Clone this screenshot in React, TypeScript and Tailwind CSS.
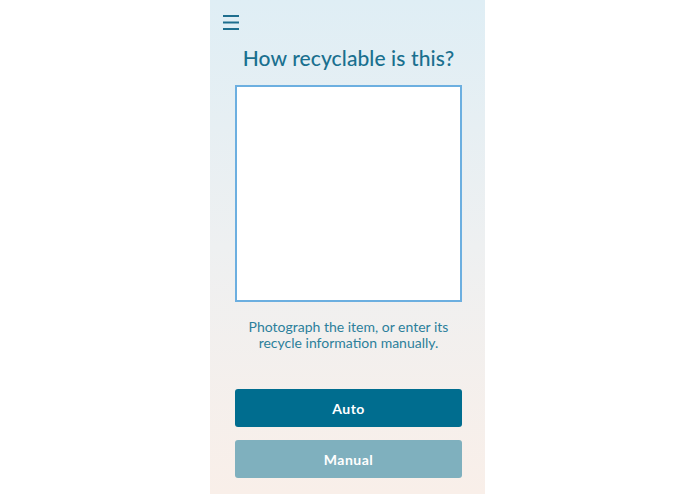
import React from "react";

const font = { fontFamily: '"Lato", "Open Sans", sans-serif' };

const MenuIcon = () => (
  <svg width="16" height="15" viewBox="0 0 16 15" fill="none">
    <path d="M0 1h16M0 7.5h16M0 14h16" stroke="#1e6e8e" strokeWidth="2" />
  </svg>
);

const App = () => {
  return (
    <div className="flex justify-center w-full h-[494px] bg-white" style={font}>
      <div className="flex flex-col w-[275px] h-full pl-[25px] pr-[23px] bg-linear-to-b from-[#dfeef5] via-[#eef0f1] to-[#f9efe9]">
        <button type="button" className="mt-[15px] -ml-[12px] w-[16px] h-[15px] flex">
          <MenuIcon />
        </button>
        <h1 className="mt-[16px] text-center text-[21px] leading-[24px] font-medium text-[#19708f] tracking-[0.1px]">
          How recyclable is this?
        </h1>
        <div className="mt-[15px] h-[217px] p-[2px] bg-[#6cafe0]">
          <div className="w-full h-full bg-white" />
        </div>
        <p className="mt-[17px] text-center text-[14px] leading-[16px] text-[#2c7f9b]">
          Photograph the item, or enter its
          <br />
          recycle information manually.
        </p>
        <button
          type="button"
          className="mt-[38px] h-[38px] rounded-[3px] bg-[#006d8f] text-white text-[14px] font-bold tracking-[0.5px]"
        >
          Auto
        </button>
        <button
          type="button"
          className="mt-[13px] h-[38px] rounded-[3px] bg-[#7fb0be] text-white text-[14px] font-bold tracking-[0.5px]"
        >
          Manual
        </button>
      </div>
    </div>
  );
};

export default App;
